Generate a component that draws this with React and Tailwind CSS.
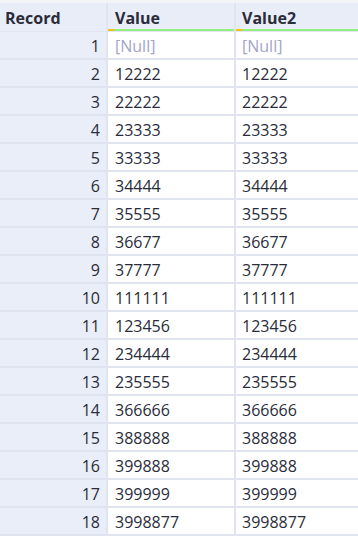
import React from "react";

const rows = [
  "[Null]", "12222", "22222", "23333", "33333", "34444", "35555", "36677", "37777",
  "111111", "123456", "234444", "235555", "366666", "388888", "399888", "399999", "3998877",
];

export default function App() {
  return (
    <div
      className="w-[358px] h-[541px] bg-white overflow-hidden text-[#2a2c3a]"
      style={{ fontFamily: '"Open Sans", "Noto Sans", sans-serif' }}
    >
      <div className="h-[3px] bg-[#f3f4f7]" />
      <div className="flex h-[29px] bg-[#e9edf7] border-b border-[#e1e6f1]">
        <div className="w-[108px] shrink-0 border-r-2 border-[#dfe4ef] pl-[5px] pt-[4px] text-[16px] font-bold leading-[22px]">
          Record
        </div>
        <div className="w-[128px] shrink-0 border-r-2 border-[#dfe4ef] flex flex-col">
          <div className="flex-1 pl-[7px] pt-[4px] text-[16px] font-bold leading-[22px]">Value</div>
          <div className="flex h-[3px]">
            <div className="w-[6px] bg-[#f2c21b]" />
            <div className="flex-1 bg-[#93ef7f]" />
          </div>
        </div>
        <div className="flex-1 flex flex-col">
          <div className="flex-1 pl-[6px] pt-[4px] text-[16px] font-bold leading-[22px]">Value2</div>
          <div className="flex h-[3px]">
            <div className="w-[6px] bg-[#f2c21b]" />
            <div className="flex-1 bg-[#93ef7f]" />
          </div>
        </div>
      </div>
      {rows.map((v, i) => {
        const isNull = v === "[Null]";
        return (
          <div key={i} className="flex h-[28px] border-b-2 border-[#dfe4ef] text-[16px] leading-[29px]">
            <div className="w-[108px] shrink-0 bg-[#e9eef8] border-r-2 border-[#dfe4ef] text-right pr-[6px]">
              {i + 1}
            </div>
            <div
              className={`w-[128px] shrink-0 border-r-2 border-[#dfe4ef] pl-[7px] ${
                isNull ? "text-[#a3a4c8]" : ""
              }`}
            >
              {v}
            </div>
            <div className={`flex-1 pl-[6px] ${isNull ? "text-[#a3a4c8]" : ""}`}>{v}</div>
          </div>
        );
      })}
    </div>
  );
}
